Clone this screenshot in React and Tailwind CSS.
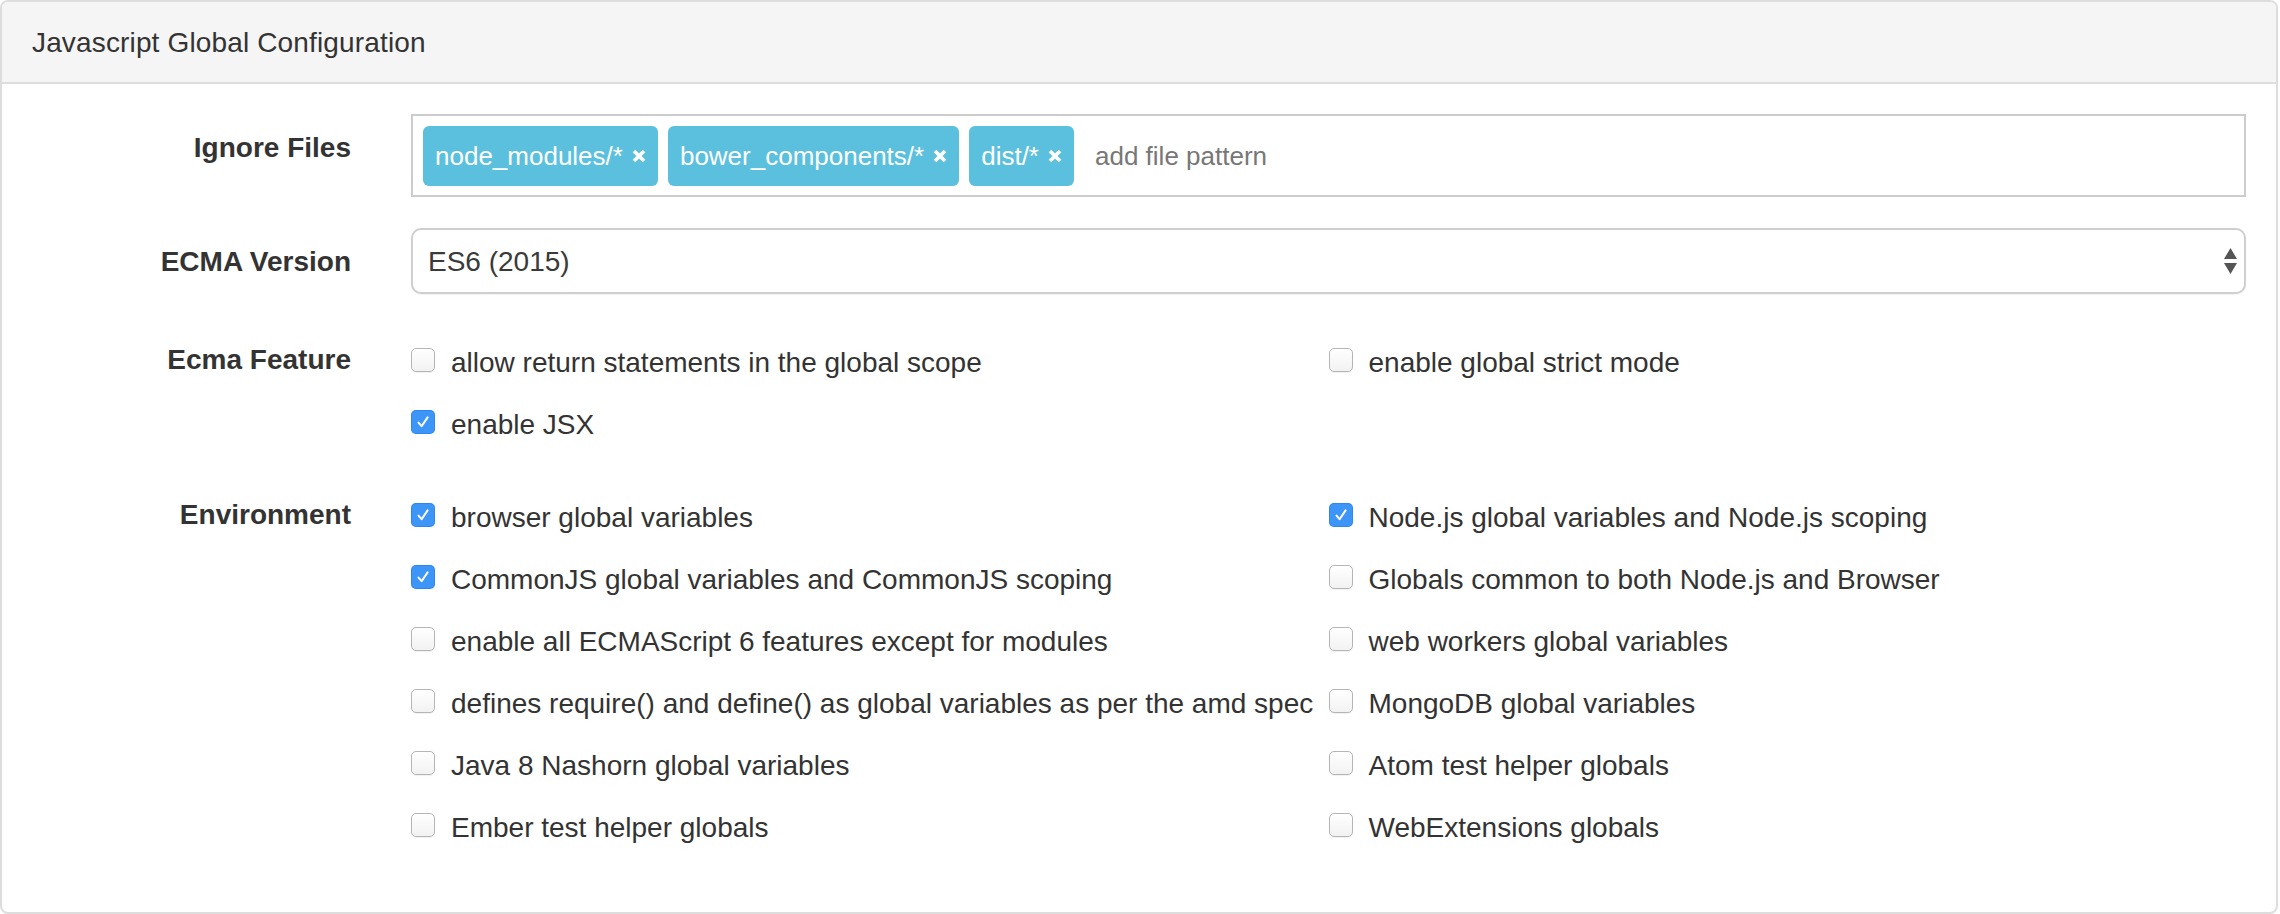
import React from "react";

function Check({ checked }) {
  if (checked) {
    return (
      <span className="mt-[8px] flex h-[24px] w-[24px] shrink-0 items-center justify-center rounded-[5px] bg-[#3d96f7] shadow-[inset_0_0_0_1px_rgba(20,110,230,0.35)]">
        <svg width="18" height="18" viewBox="0 0 18 18">
          <path d="M4.5 9.6 L7.6 13.2 L13.6 4.4" fill="none" stroke="white" strokeWidth="2" strokeLinecap="round" strokeLinejoin="round" />
        </svg>
      </span>
    );
  }
  return (
    <span className="mt-[8px] h-[24px] w-[24px] shrink-0 rounded-[5px] border border-[#b5b5b5] bg-linear-to-b from-white to-[#f2f2f2] shadow-[0_1px_1px_rgba(0,0,0,0.06)]" />
  );
}

function Item({ checked, label }) {
  if (!label) return <div className="h-[40px]" />;
  return (
    <label className="flex h-[40px] items-start gap-[16px] whitespace-nowrap">
      <Check checked={checked} />
      <span className="pt-[3px] leading-[40px]">{label}</span>
    </label>
  );
}

function Tag({ text }) {
  return (
    <span className="flex h-[60px] items-center rounded-[6px] bg-[#5bc0de] px-[12px] text-[26px] text-white">
      <span>{text}</span>
      <svg className="ml-[9px]" width="14" height="14" viewBox="0 0 14 14">
        <path d="M2 2 L12 12 M12 2 L2 12" stroke="white" strokeWidth="3.6" strokeLinecap="butt" />
      </svg>
    </span>
  );
}

function Group({ label, children, className }) {
  return (
    <div className={"flex " + (className || "")}>
      <div className="w-[379px] shrink-0 pr-[30px] pt-[14px] text-right font-bold leading-[40px]">{label}</div>
      <div className="min-w-0 flex-1 px-[30px]">{children}</div>
    </div>
  );
}

const ecma = [
  [false, "allow return statements in the global scope"],
  [false, "enable global strict mode"],
  [true, "enable JSX"],
  [false, ""],
];

const env = [
  [true, "browser global variables"],
  [true, "Node.js global variables and Node.js scoping"],
  [true, "CommonJS global variables and CommonJS scoping"],
  [false, "Globals common to both Node.js and Browser"],
  [false, "enable all ECMAScript 6 features except for modules"],
  [false, "web workers global variables"],
  [false, "defines require() and define() as global variables as per the amd spec"],
  [false, "MongoDB global variables"],
  [false, "Java 8 Nashorn global variables"],
  [false, "Atom test helper globals"],
  [false, "Ember test helper globals"],
  [false, "WebExtensions globals"],
];

export default function App() {
  return (
    <div className="min-h-screen w-[2280px] bg-white font-['Liberation_Sans',Arial,Helvetica,sans-serif] text-[28px] leading-[40px] text-[#333]">
      <div className="w-[2278px] overflow-hidden rounded-[8px] border-2 border-[#dddddd]">
        <div className="flex h-[82px] items-center border-b-2 border-[#dddddd] bg-[#f5f5f5] px-[30px] pt-[2px] tracking-[0.15px]">
          Javascript Global Configuration
        </div>
        <div className="pb-[67px] pt-[30px]">
          <Group label="Ignore Files" className="mb-[31px]">
            <div className="flex h-[83px] items-center gap-[10px] border-2 border-[#cccccc] bg-white px-[10px]">
              <Tag text="node_modules/*" />
              <Tag text="bower_components/*" />
              <Tag text="dist/*" />
              <span className="ml-[11px] text-[26px] text-[#777]">add file pattern</span>
            </div>
          </Group>
          <Group label="ECMA Version" className="mb-[32px]">
            <div className="flex h-[66px] items-center justify-between rounded-[10px] border-2 border-[#cfcfcf] bg-white pl-[15px] pr-[7px] shadow-[0_1px_1px_rgba(0,0,0,0.05)]">
              <span className="pt-[2px] text-[#3a3a3a]">ES6 (2015)</span>
              <svg width="13" height="26" viewBox="0 0 13 26">
                <path d="M0 11 L6.5 0 L13 11 Z" fill="#555" />
                <path d="M0 15 L13 15 L6.5 26 Z" fill="#555" />
              </svg>
            </div>
          </Group>
          <Group label="Ecma Feature" className="mb-[39px]">
            <div className="grid grid-cols-2 gap-y-[22px] pt-[14px]">
              {ecma.map(([c, l], i) => (
                <Item key={i} checked={c} label={l} />
              ))}
            </div>
          </Group>
          <Group label="Environment">
            <div className="grid grid-cols-2 gap-y-[22px] pt-[14px]">
              {env.map(([c, l], i) => (
                <Item key={i} checked={c} label={l} />
              ))}
            </div>
          </Group>
        </div>
      </div>
    </div>
  );
}
